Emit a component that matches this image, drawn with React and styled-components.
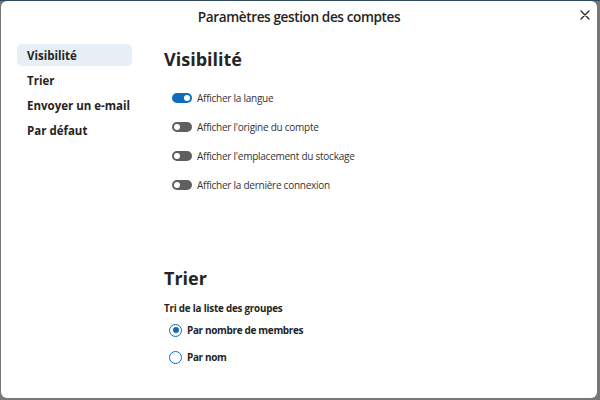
import React, { useState } from "react";
import styled, { createGlobalStyle } from "styled-components";

const Global = createGlobalStyle`
  html, body { margin: 0; padding: 0; }
  body {
    width: 600px;
    height: 400px;
    overflow: hidden;
    background: #777777;
    font-family: "Open Sans", "Noto Sans", "Liberation Sans", sans-serif;
    color: #242424;
  }
`;

const Backdrop = styled.div`
  width: 600px;
  height: 400px;
  box-sizing: border-box;
  border-top: 1px solid #2e4a5c;
  padding: 0 3px 2px 1px;
`;

const Dialog = styled.div`
  height: 100%;
  background: #fff;
  border-radius: 6px;
  display: flex;
  flex-direction: column;
  overflow: hidden;
`;

const Header = styled.div`
  position: relative;
  height: 30px;
  display: flex;
  align-items: center;
  justify-content: center;
  font-size: 13.6px;
  letter-spacing: -0.4px;
  font-weight: 600;
  color: #242424;
`;

const Close = styled.button`
  position: absolute;
  right: 3px;
  top: 5px;
  width: 18px;
  height: 18px;
  border: 0;
  background: none;
  padding: 0;
  display: flex;
  align-items: center;
  justify-content: center;
  cursor: pointer;
`;

const Body = styled.div`
  flex: 1;
  display: flex;
  padding: 13px 0 0 16px;
`;

const Nav = styled.nav`
  width: 115px;
  display: flex;
  flex-direction: column;
  gap: 3px;
`;

const NavItem = styled.div`
  height: 22px;
  display: flex;
  align-items: center;
  padding-left: 10px;
  border-radius: 5px;
  font-size: 11.5px;
  font-weight: 700;
  color: #242424;
  background: ${p => (p.$active ? "#e6eef6" : "transparent")};
`;

const Content = styled.main`
  flex: 1;
  padding-left: 32px;
  display: flex;
  flex-direction: column;
`;

const SectionTitle = styled.h2`
  margin: 0;
  font-size: 18px;
  font-weight: 700;
  line-height: 30px;
  color: #242424;
`;

const ToggleList = styled.div`
  display: flex;
  flex-direction: column;
  gap: 10px;
  margin: 14px 0 0 8px;
`;

const ToggleRow = styled.label`
  height: 19px;
  display: flex;
  align-items: center;
  gap: 5px;
  font-size: 10px;
  letter-spacing: -0.25px;
  color: #333;
`;

const Track = styled.span`
  width: 20px;
  height: 10px;
  border-radius: 5px;
  background: ${p => (p.$on ? "#0f6cbd" : "#5f5f5f")};
  display: flex;
  align-items: center;
  justify-content: ${p => (p.$on ? "flex-end" : "flex-start")};
  padding: 0 2px;
  box-sizing: border-box;
`;

const Knob = styled.span`
  width: 6px;
  height: 6px;
  border-radius: 50%;
  background: #fff;
`;

const SortSection = styled.section`
  margin-top: 69px;
`;

const GroupLabel = styled.div`
  margin-top: 9px;
  font-size: 9.8px;
  letter-spacing: -0.2px;
  font-weight: 700;
  color: #242424;
`;

const RadioList = styled.div`
  display: flex;
  flex-direction: column;
  gap: 9px;
  margin: 6px 0 0 5px;
`;

const RadioRow = styled.label`
  height: 18px;
  display: flex;
  align-items: center;
  gap: 5px;
  font-size: 10px;
  letter-spacing: -0.35px;
  font-weight: 700;
  color: #242424;
`;

const Circle = styled.span`
  width: 13px;
  height: 13px;
  box-sizing: border-box;
  border-radius: 50%;
  border: 1.5px solid #0f6cbd;
  display: flex;
  align-items: center;
  justify-content: center;
  &::after {
    content: "";
    width: 6px;
    height: 6px;
    border-radius: 50%;
    background: ${p => (p.$checked ? "#0f6cbd" : "transparent")};
  }
`;

const toggles = [
  { label: "Afficher la langue", on: true },
  { label: "Afficher l'origine du compte", on: false },
  { label: "Afficher l'emplacement du stockage", on: false },
  { label: "Afficher la dernière connexion", on: false },
];

export default function App() {
  const [sort, setSort] = useState("members");
  return (
    <>
      <Global />
      <Backdrop>
        <Dialog>
          <Header>
            Paramètres gestion des comptes
            <Close aria-label="Fermer">
              <svg width="10" height="10" viewBox="0 0 10 10">
                <path d="M1 1L9 9M9 1L1 9" stroke="#242424" strokeWidth="1.2" strokeLinecap="round" />
              </svg>
            </Close>
          </Header>
          <Body>
            <Nav>
              <NavItem $active>Visibilité</NavItem>
              <NavItem>Trier</NavItem>
              <NavItem>Envoyer un e-mail</NavItem>
              <NavItem>Par défaut</NavItem>
            </Nav>
            <Content>
              <SectionTitle>Visibilité</SectionTitle>
              <ToggleList>
                {toggles.map(t => (
                  <ToggleRow key={t.label}>
                    <Track $on={t.on}><Knob /></Track>
                    {t.label}
                  </ToggleRow>
                ))}
              </ToggleList>
              <SortSection>
                <SectionTitle>Trier</SectionTitle>
                <GroupLabel>Tri de la liste des groupes</GroupLabel>
                <RadioList>
                  <RadioRow onClick={() => setSort("members")}>
                    <Circle $checked={sort === "members"} />
                    Par nombre de membres
                  </RadioRow>
                  <RadioRow onClick={() => setSort("name")}>
                    <Circle $checked={sort === "name"} />
                    Par nom
                  </RadioRow>
                </RadioList>
              </SortSection>
            </Content>
          </Body>
        </Dialog>
      </Backdrop>
    </>
  );
}
